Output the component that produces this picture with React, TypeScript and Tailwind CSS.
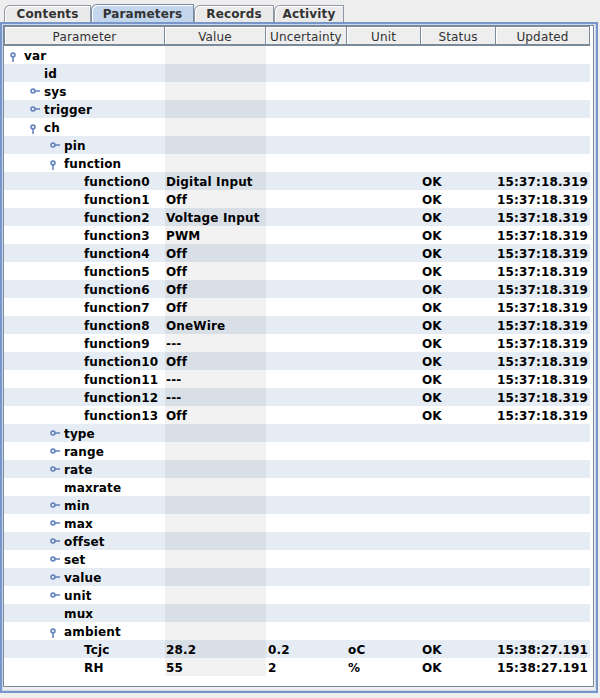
import React from "react";

type Row = {
  name: string;
  level: number;
  kind: "leaf" | "open" | "closed";
  value?: string;
  unc?: string;
  unit?: string;
  status?: string;
  updated?: string;
};

const fnValues = [
  "Digital Input",
  "Off",
  "Voltage Input",
  "PWM",
  "Off",
  "Off",
  "Off",
  "Off",
  "OneWire",
  "---",
  "Off",
  "---",
  "---",
  "Off",
];

const rows: Row[] = [
  { name: "var", level: 0, kind: "open" },
  { name: "id", level: 1, kind: "leaf" },
  { name: "sys", level: 1, kind: "closed" },
  { name: "trigger", level: 1, kind: "closed" },
  { name: "ch", level: 1, kind: "open" },
  { name: "pin", level: 2, kind: "closed" },
  { name: "function", level: 2, kind: "open" },
  ...fnValues.map((v, i) => ({
    name: `function${i}`,
    level: 3,
    kind: "leaf" as const,
    value: v,
    status: "OK",
    updated: "15:37:18.319",
  })),
  { name: "type", level: 2, kind: "closed" },
  { name: "range", level: 2, kind: "closed" },
  { name: "rate", level: 2, kind: "closed" },
  { name: "maxrate", level: 2, kind: "leaf" },
  { name: "min", level: 2, kind: "closed" },
  { name: "max", level: 2, kind: "closed" },
  { name: "offset", level: 2, kind: "closed" },
  { name: "set", level: 2, kind: "closed" },
  { name: "value", level: 2, kind: "closed" },
  { name: "unit", level: 2, kind: "closed" },
  { name: "mux", level: 2, kind: "leaf" },
  { name: "ambient", level: 2, kind: "open" },
  { name: "Tcjc", level: 3, kind: "leaf", value: "28.2", unc: "0.2", unit: "oC", status: "OK", updated: "15:38:27.191" },
  { name: "RH", level: 3, kind: "leaf", value: "55", unc: "2", unit: "%", status: "OK", updated: "15:38:27.191" },
];

const indent = ["pl-[20px]", "pl-[40px]", "pl-[60px]", "pl-[80px]"];
const iconLeft = ["left-[6px]", "left-[26px]", "left-[46px]", "left-[66px]"];

function ClosedIcon() {
  return (
    <svg width="11" height="10" viewBox="0 0 11 10">
      <circle cx="3" cy="5" r="2" fill="#dfe8f5" stroke="#5f7fbb" strokeWidth="1.5" />
      <line x1="5" y1="5" x2="10" y2="5" stroke="#5f7fbb" strokeWidth="1.5" />
    </svg>
  );
}

function OpenIcon() {
  return (
    <svg width="6" height="11" viewBox="0 0 6 11">
      <circle cx="3" cy="3" r="2" fill="#dfe8f5" stroke="#5f7fbb" strokeWidth="1.5" />
      <line x1="3" y1="5" x2="3" y2="10" stroke="#5f7fbb" strokeWidth="1.5" />
    </svg>
  );
}

const tabs = [
  { label: "Contents", w: "w-[87px]", sel: false },
  { label: "Parameters", w: "w-[103px]", sel: true },
  { label: "Records", w: "w-[80px]", sel: false },
  { label: "Activity", w: "w-[70px]", sel: false },
];

const headers = [
  { label: "Parameter", w: "w-[161px]" },
  { label: "Value", w: "w-[101px]" },
  { label: "Uncertainty", w: "w-[81px]" },
  { label: "Unit", w: "w-[74px]" },
  { label: "Status", w: "w-[75px]" },
  { label: "Updated", w: "w-[94px]" },
];

export default function App() {
  return (
    <div className="w-[600px] h-[698px] bg-[#eeeeee] pt-[4px] overflow-hidden font-['DejaVu_Sans',sans-serif] tracking-[0.15px]">
      {/* Tabs */}
      <div className="flex items-end h-[18px] pl-[4px]">
        {tabs.map((t) => (
          <div
            key={t.label}
            className={`${t.w} ${
              t.sel
                ? "h-[18px] bg-[#c3d6ec] border-[#7b8da5]"
                : "h-[17px] bg-[#eaeaea] border-[#8e98a4]"
            } border-l border-t border-r rounded-tl-[6px] shadow-[inset_1px_1px_0_#ffffff] flex items-center justify-center text-[12px] font-bold text-[#333333] leading-none`}
          >
            {t.label}
          </div>
        ))}
      </div>

      {/* Tab content panel */}
      <div className="w-[598px] h-[671px] border-2 border-[#7896c9] shadow-[inset_0_0_0_1px_#c9d8ee] pt-[1px] pl-[1px] pr-[2px] pb-[4px]">
        {/* Scroll pane */}
        <div className="h-full border border-[#7a8a99] bg-white overflow-hidden">
          {/* Header */}
          <div className="flex h-[20px] w-[586px]">
            {headers.map((h, i) => (
              <div
                key={h.label}
                className={`${h.w} ${
                  i === 0 ? "border-l" : ""
                } border-r border-b-2 border-t border-[#7a8a99] bg-[#eeeeee] shadow-[inset_1px_1px_0_#ffffff] pt-[2px] flex items-center justify-center text-[12px] text-[#333333] leading-none`}
              >
                {h.label}
              </div>
            ))}
          </div>

          {/* Rows */}
          {rows.map((r, idx) => {
            const alt = idx % 2 === 1;
            return (
              <div
                key={idx}
                className={`flex h-[18px] w-[586px] text-[12px] font-bold text-black leading-[20px] ${
                  alt ? "bg-[#e6ecf4]" : "bg-white"
                }`}
              >
                <div className={`relative w-[161px] h-[18px] ${indent[r.level]} whitespace-nowrap`}>
                  {r.kind === "closed" && (
                    <span className={`absolute ${iconLeft[r.level]} top-[4px] flex`}>
                      <ClosedIcon />
                    </span>
                  )}
                  {r.kind === "open" && (
                    <span className={`absolute ${iconLeft[r.level]} top-[6px] flex`}>
                      <OpenIcon />
                    </span>
                  )}
                  {r.name}
                </div>
                <div
                  className={`w-[101px] h-[18px] pl-[1px] whitespace-nowrap ${
                    alt ? "bg-[#d8dfe7]" : "bg-[#f2f2f2]"
                  }`}
                >
                  {r.value ?? ""}
                </div>
                <div className="w-[81px] h-[18px] pl-[2px] whitespace-nowrap">{r.unc ?? ""}</div>
                <div className="w-[74px] h-[18px] pl-[1px] whitespace-nowrap">{r.unit ?? ""}</div>
                <div className="w-[75px] h-[18px] pl-[1px] whitespace-nowrap">{r.status ?? ""}</div>
                <div className="w-[94px] h-[18px] pl-[1px] whitespace-nowrap">{r.updated ?? ""}</div>
              </div>
            );
          })}
        </div>
      </div>
    </div>
  );
}
